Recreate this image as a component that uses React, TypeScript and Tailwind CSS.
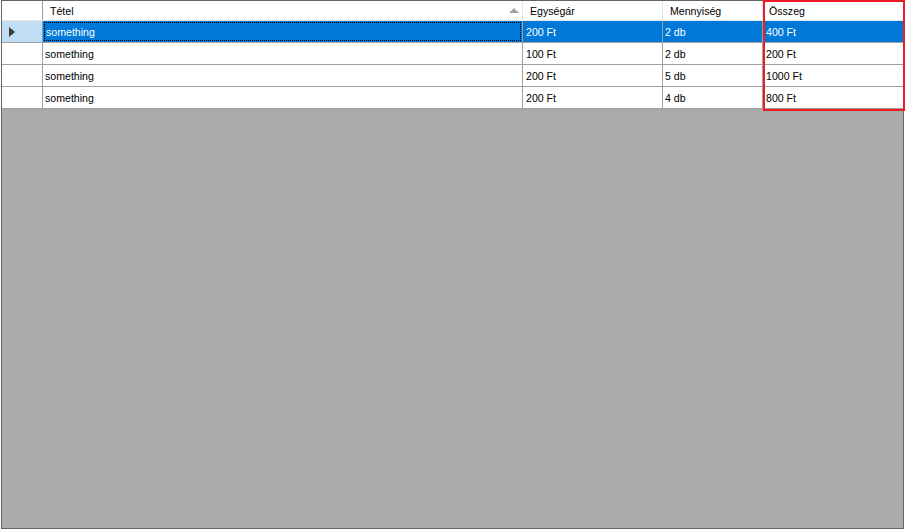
import React from "react";

type Row = { tetel: string; ar: string; db: string; osszeg: string };

const ROWS: Row[] = [
  { tetel: "something", ar: "200 Ft", db: "2 db", osszeg: "400 Ft" },
  { tetel: "something", ar: "100 Ft", db: "2 db", osszeg: "200 Ft" },
  { tetel: "something", ar: "200 Ft", db: "5 db", osszeg: "1000 Ft" },
  { tetel: "something", ar: "200 Ft", db: "4 db", osszeg: "800 Ft" },
];

const font = { fontFamily: '"Liberation Sans", Arial, sans-serif' };

export default function App() {
  return (
    <div className="w-[905px] h-[532px] bg-white relative text-[10.6px] text-black" style={font}>
      {/* grid frame */}
      <div className="ml-[1px] w-[903px] h-[529px] border border-[#646464] bg-[#ababab] flex flex-col">
        {/* header */}
        <div className="flex h-[20px] bg-white border-b border-[#e5e5e5]">
          <div className="w-[41px] border-r border-[#a0a0a0]" />
          <div className="w-[480px] border-r border-[#e5e5e5] flex items-center pl-[7px] pt-[2px] relative">
            Tétel
            <svg className="absolute right-[3px] top-[7px]" width="10" height="5" viewBox="0 0 10 5">
              <path d="M0 5 L5 0 L10 5 Z" fill="#a5a5a5" />
            </svg>
          </div>
          <div className="w-[140px] border-r border-[#e5e5e5] flex items-center pl-[7px] pt-[2px]">Egységár</div>
          <div className="w-[100px] border-r border-[#e5e5e5] flex items-center pl-[7px] pt-[2px]">Mennyiség</div>
          <div className="w-[140px] flex items-center pl-[6px] pt-[2px]">Összeg</div>
        </div>

        {/* rows */}
        {ROWS.map((r, i) => {
          const sel = i === 0;
          const cell = sel ? "bg-[#0078d7] text-white" : "bg-white";
          return (
            <div key={i} className="flex h-[22px] border-b border-[#a0a0a0]">
              <div
                className={`w-[41px] border-r border-[#a0a0a0] flex items-center pl-[7px] ${
                  sel ? "bg-[#bfddf5]" : "bg-white"
                }`}
              >
                {sel && (
                  <svg width="6" height="10" viewBox="0 0 6 10">
                    <path d="M0 0 L6 5 L0 10 Z" fill="#3c3c3c" />
                  </svg>
                )}
              </div>
              <div className={`w-[480px] border-r border-[#a0a0a0] p-[1px] ${cell}`}>
                <div
                  className={`h-full flex items-center pl-[1px] pt-[2px] ${
                    sel ? "border border-dotted border-black" : ""
                  }`}
                >
                  {r.tetel}
                </div>
              </div>
              <div className={`w-[140px] border-r border-[#a0a0a0] flex items-center pl-[3px] pt-[2px] ${cell}`}>{r.ar}</div>
              <div className={`w-[100px] border-r border-[#a0a0a0] flex items-center pl-[2px] pt-[2px] ${cell}`}>{r.db}</div>
              <div className={`w-[140px] flex items-center pl-[3px] pt-[2px] ${cell}`}>{r.osszeg}</div>
            </div>
          );
        })}
      </div>

      {/* red highlight overlay */}
      <div className="absolute left-[763px] top-0 w-[142px] h-[111px] border-2 border-[#ed1c24] pointer-events-none" />
    </div>
  );
}
